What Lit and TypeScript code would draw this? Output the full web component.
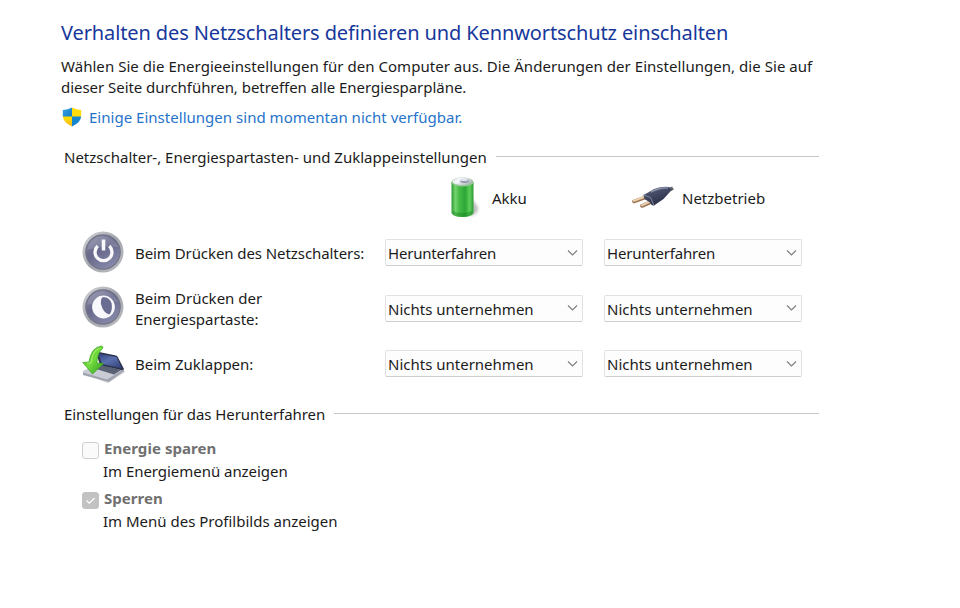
import { LitElement, html, css, svg } from "lit";
import { customElement, property } from "lit/decorators.js";

const shield = svg`<svg class="shield" width="20" height="20" viewBox="0 0 20 20">
  <defs><clipPath id="sh"><path d="M10 .6Q14 3 19.2 3V9Q19 15.500 10 19.400Q1 15.500 .8 9V3Q6 3 10 .6Z"/></clipPath>
  <linearGradient id="bl" x2="1" y2="1"><stop stop-color="#36a7e8"/><stop offset="1" stop-color="#1479c4"/></linearGradient>
  <linearGradient id="ye" x2="0" y2="1"><stop stop-color="#ffe100"/><stop offset="1" stop-color="#f0b323"/></linearGradient></defs>
  <g clip-path="url(#sh)"><path fill="url(#bl)" d="M0 0H10V10H0Z"/><path fill="#ffdc09" d="M10 0H20V10H10Z"/><path fill="url(#ye)" d="M0 9.500H10V20H0Z"/><path fill="#1687cf" d="M10 9.500H20V20H10Z"/></g>
</svg>`;

const battery = svg`<svg width="44" height="44" viewBox="0 0 44 44">
  <defs><linearGradient id="bg"><stop stop-color="#2f9b35"/><stop offset=".18" stop-color="#74d470"/><stop offset=".33" stop-color="#4abd4a"/><stop offset=".62" stop-color="#2ba735"/><stop offset=".83" stop-color="#5fce5a"/><stop offset="1" stop-color="#2c9834"/></linearGradient>
  <linearGradient id="bt" x2="1" y2=".5"><stop stop-color="#cfd8d6"/><stop offset=".4" stop-color="#f8faff"/><stop offset="1" stop-color="#a9bab5"/></linearGradient>
  <filter id="bs" x="-50%" y="-50%" width="200%" height="200%"><feGaussianBlur stdDeviation="1.800"/></filter></defs>
  <path d="M29 22L36 31Q37 38 28 40Z" fill="#888" opacity=".55" filter="url(#bs)"/>
  <path d="M9.500 6V37Q11 41 20.500 41Q30 41 31.500 37V6Z" fill="url(#bg)"/>
  <path d="M11 35Q20 39 30 35V38Q28 41 20 41Q12 41 11 38Z" fill="#178024" opacity=".4"/>
  <ellipse cx="20.500" cy="6" rx="11" ry="4.600" fill="#9bc79a"/>
  <ellipse cx="20.500" cy="5.300" rx="10" ry="3.800" fill="url(#bt)"/>
  <ellipse cx="22.500" cy="5" rx="4.300" ry="2" fill="#9a9daf"/><ellipse cx="22" cy="3.700" rx="3.800" ry="1.300" fill="#dfe2ee"/>
</svg>`;

const plug = svg`<svg width="44" height="28" viewBox="0 0 44 28">
  <defs><linearGradient id="pg" x2=".5" y2="1"><stop stop-color="#7b829a"/><stop offset=".4" stop-color="#474d68"/><stop offset="1" stop-color="#292d45"/></linearGradient></defs>
  <path d="M34 5.500Q38 6 41 4" fill="none" stroke="#66676e" stroke-width="3.500"/>
  <path d="M2 17.500L13 13.500M10 22L19 18" stroke="#9b7455" stroke-width="3.600" stroke-linecap="round"/>
  <path d="M2 16.800L12 13M10 21.300L18 17.500" stroke="#ecd1b0" stroke-width="2" stroke-linecap="round"/>
  <path d="M11.500 11Q17 8 22 5Q30 2 37 3L40 5.500Q37 9 31.500 15L22 21.500Q19.500 22 18 18.500L12.500 15Z" fill="url(#pg)"/>
  <path d="M11.500 11L18.500 13.500L22 21.500" fill="none" stroke="#8388a0" stroke-width="1"/><path d="M19 8Q28 3.500 36 4" stroke="#969eb5" stroke-width="1.200" fill="none"/>
</svg>`;

const disc = (glyph: unknown) => svg`<svg class="disc" width="42" height="42" viewBox="0 0 42 42">
  <defs><linearGradient id="rim" x2="1" y2="1"><stop stop-color="#d5d6da"/><stop offset=".5" stop-color="#a4a6ae"/><stop offset="1" stop-color="#bcbdc2"/></linearGradient>
  <linearGradient id="face" x2=".6" y2="1"><stop stop-color="#8f90aa"/><stop offset=".5" stop-color="#67688b"/><stop offset="1" stop-color="#8587a8"/></linearGradient></defs>
  <circle cx="21" cy="21" r="20.500" fill="url(#rim)"/><circle cx="21" cy="21" r="17.800" fill="#727484"/><circle cx="21" cy="21" r="16.600" fill="url(#face)"/>
  <path d="M5 19A16 16 0 0 1 36 16Q22 14 5 19Z" fill="#fff" opacity=".13"/>${glyph}</svg>`;

const power = disc(svg`<path d="M15.700 15A8.500 8.500 0 1 0 27.300 15" fill="none" stroke="#f8f8fb" stroke-width="3.300"/><path d="M21.500 8.500V19.500" stroke="#f8f8fb" stroke-width="3.600"/>`);
const sleep = disc(svg`<circle cx="21.500" cy="21" r="11.400" fill="#f8f8fc"/><path d="M20 11.500Q27 10.500 29.500 17Q31 24 27.500 28.500Q23 27.500 20.500 22.500Q17.500 16 20 11.500Z" fill="#6a6c91"/>`);

const laptop = svg`<svg width="44" height="38" viewBox="0 0 44 38">
  <defs><linearGradient id="gr" x2="1" y2="1"><stop stop-color="#4db530"/><stop offset=".5" stop-color="#72db3e"/><stop offset="1" stop-color="#2c9a20"/></linearGradient>
  <linearGradient id="sc" x2=".8" y2="1"><stop stop-color="#2f3f78"/><stop offset=".5" stop-color="#5b70b0"/><stop offset="1" stop-color="#34457a"/></linearGradient></defs>
  <path d="M1 29L26 38L43 27L40 23L10 25Z" fill="#777" opacity=".35"/>
  <path d="M1 26L16 18.500L42 24L28 35Q26 36.500 23 35.500L1 28.500Z" fill="#c9ccd4"/>
  <path d="M11 23L17 19.500L39 25L32 29.500Z" fill="#596174"/>
  <path d="M1 27.500L25 34.500L42 24V26L27 37L1 30Z" fill="#a0a4af"/>
  <path d="M14 7.500Q15 6.500 17 7L34 10.500Q35.500 11 36 12.500L42 24Q41 25.500 39 25L18 20Z" fill="#2b3148"/><path d="M16 8.500L34.500 12L40 23.500L20 19Z" fill="url(#sc)"/>
  <path d="M20 1Q9 2 7 17L.8 17.500L10.500 29L21.500 18.500L15 18Q15 8 21 3Z" fill="url(#gr)" stroke="#36a51f" stroke-width=".7"/>
  <path d="M18 3Q10 6 9 18L5 18.300" fill="none" stroke="#a0ed68" stroke-width="1.200"/>
</svg>`;

@customElement("choice-box")
class ChoiceBox extends LitElement {
  @property() value = "";
  static styles = css`
    :host { box-sizing: border-box; display: flex; align-items: center; justify-content: space-between; width: 198px; height: 27px; padding: 0 4px 0 2px; border: 1px solid #e2e2e2; border-bottom-color: #cecece; border-radius: 2px; background: #fdfdfd; }
    span { line-height: 21px; white-space: nowrap; position: relative; top: 1px; }
    svg { flex: none; }
  `;
  render() {
    return html`<span>${this.value}</span><svg width="11" height="8" viewBox="0 0 11 8"><path d="M1 1.500L5.500 6L10 1.500" fill="none" stroke="#7c7c7c" stroke-width="1.100"/></svg>`;
  }
}

@customElement("app-root")
class AppRoot extends LitElement {
  static styles = css`
    :host { display: block; box-sizing: border-box; width: 960px; height: 608px; padding: 19px 0 0 61px; background: #fff; color: #1b1b1b; font: 15px/21px "Noto Sans", sans-serif; overflow: hidden; white-space: nowrap; }
    h1 { margin: 0; font-size: 20px; line-height: 28px; font-weight: 400; color: #17389b; letter-spacing: -.115px; }
    p { margin: 9px 0 0; line-height: 21px; }
    .wide { letter-spacing: .042px; }
    .narrow { letter-spacing: -.04px; }
    .tight { letter-spacing: -.075px; }
    .tighter { letter-spacing: -.2px; }
    .link { display: flex; align-items: center; height: 21px; margin-top: 9px; gap: 7px; color: #2673cb; letter-spacing: .02px; }
    .shield { margin-left: 1px; position: relative; top: -1px; }
    .section { display: flex; align-items: center; width: 755px; height: 22px; margin: 18px 0 0 3px; gap: 9px; }
    .section i { flex: 1; height: 1px; background: #c6c6c6; position: relative; top: -1px; }
    .heads, .row { display: grid; grid-template-columns: 42px 261px 219px 199px; padding-left: 21px; align-items: center; }
    .heads { height: 60px; }
    .heads div { display: flex; align-items: center; }
    .heads .bat { grid-column: 3; padding-left: 57px; gap: 6px; height: 44px; }
    .heads .ac { padding-left: 28px; gap: 6px; }
    .row { height: 55.500px; }
    .row > span { padding-left: 11px; position: relative; top: 1px; }
    .row svg { display: block; }
    .row .disc { margin-top: -2px; }
    .rows { margin-top: -3px; }
    .second { margin-top: 12px; }
    .opts { padding: 11px 0 0 21px; }
    .opt { display: grid; grid-template-columns: 22px auto; height: 50px; align-content: start; row-gap: 1px; }
    .box { box-sizing: border-box; width: 17px; height: 17px; margin: 5px 0 -5px; border: 1px solid #cfcfcf; border-radius: 3px; background: #fafafa; }
    .box.on { background: #c2c2c2; border-color: #c2c2c2; }
    .box svg { display: block; }
    b { color: #707070; line-height: 22px; letter-spacing: .05px; }
    .opt span { grid-column: 1 / 3; padding-left: 21px; line-height: 22px; }
  `;
  render() {
    const rows: [unknown, unknown, string, string][] = [
      [power, "Beim Drücken des Netzschalters:", "Herunterfahren", "tighter"],
      [sleep, html`Beim Drücken der<br>Energiespartaste:`, "Nichts unternehmen", ""],
      [laptop, "Beim Zuklappen:", "Nichts unternehmen", ""],
    ];
    return html`
      <h1>Verhalten des Netzschalters definieren und Kennwortschutz einschalten</h1>
      <p><span class="wide">Wählen Sie die Energieeinstellungen für den Computer aus. Die Änderungen der Einstellungen, die Sie auf</span><br><span class="narrow">dieser Seite durchführen, betreffen alle Energiesparpläne.</span></p>
      <div class="link">${shield}<span>Einige Einstellungen sind momentan nicht verfügbar.</span></div>
      <div class="section"><span>Netzschalter-, Energiespartasten- und Zuklappeinstellungen</span><i></i></div>
      <div class="heads"><div class="bat">${battery}<span>Akku</span></div><div class="ac">${plug}<span>Netzbetrieb</span></div></div>
      <div class="rows">${rows.map(([icon, label, value, fit]) => html`<div class="row">${icon}<span class=${fit ? "tight" : ""}>${label}</span><choice-box class=${fit} .value=${value}></choice-box><choice-box class=${fit} .value=${value}></choice-box></div>`)}</div>
      <div class="section second"><span class="tight">Einstellungen für das Herunterfahren</span><i></i></div>
      <div class="opts">
        <div class="opt"><div class="box"></div><b>Energie sparen</b><span class="narrow">Im Energiemenü anzeigen</span></div>
        <div class="opt"><div class="box on"><svg width="15" height="15" viewBox="0 0 15 15"><path d="M3.500 7.500L6.300 10.200L11.500 5" fill="none" stroke="#fff" stroke-width="1.200"/></svg></div><b>Sperren</b><span>Im Menü des Profilbilds anzeigen</span></div>
      </div>`;
  }
}
